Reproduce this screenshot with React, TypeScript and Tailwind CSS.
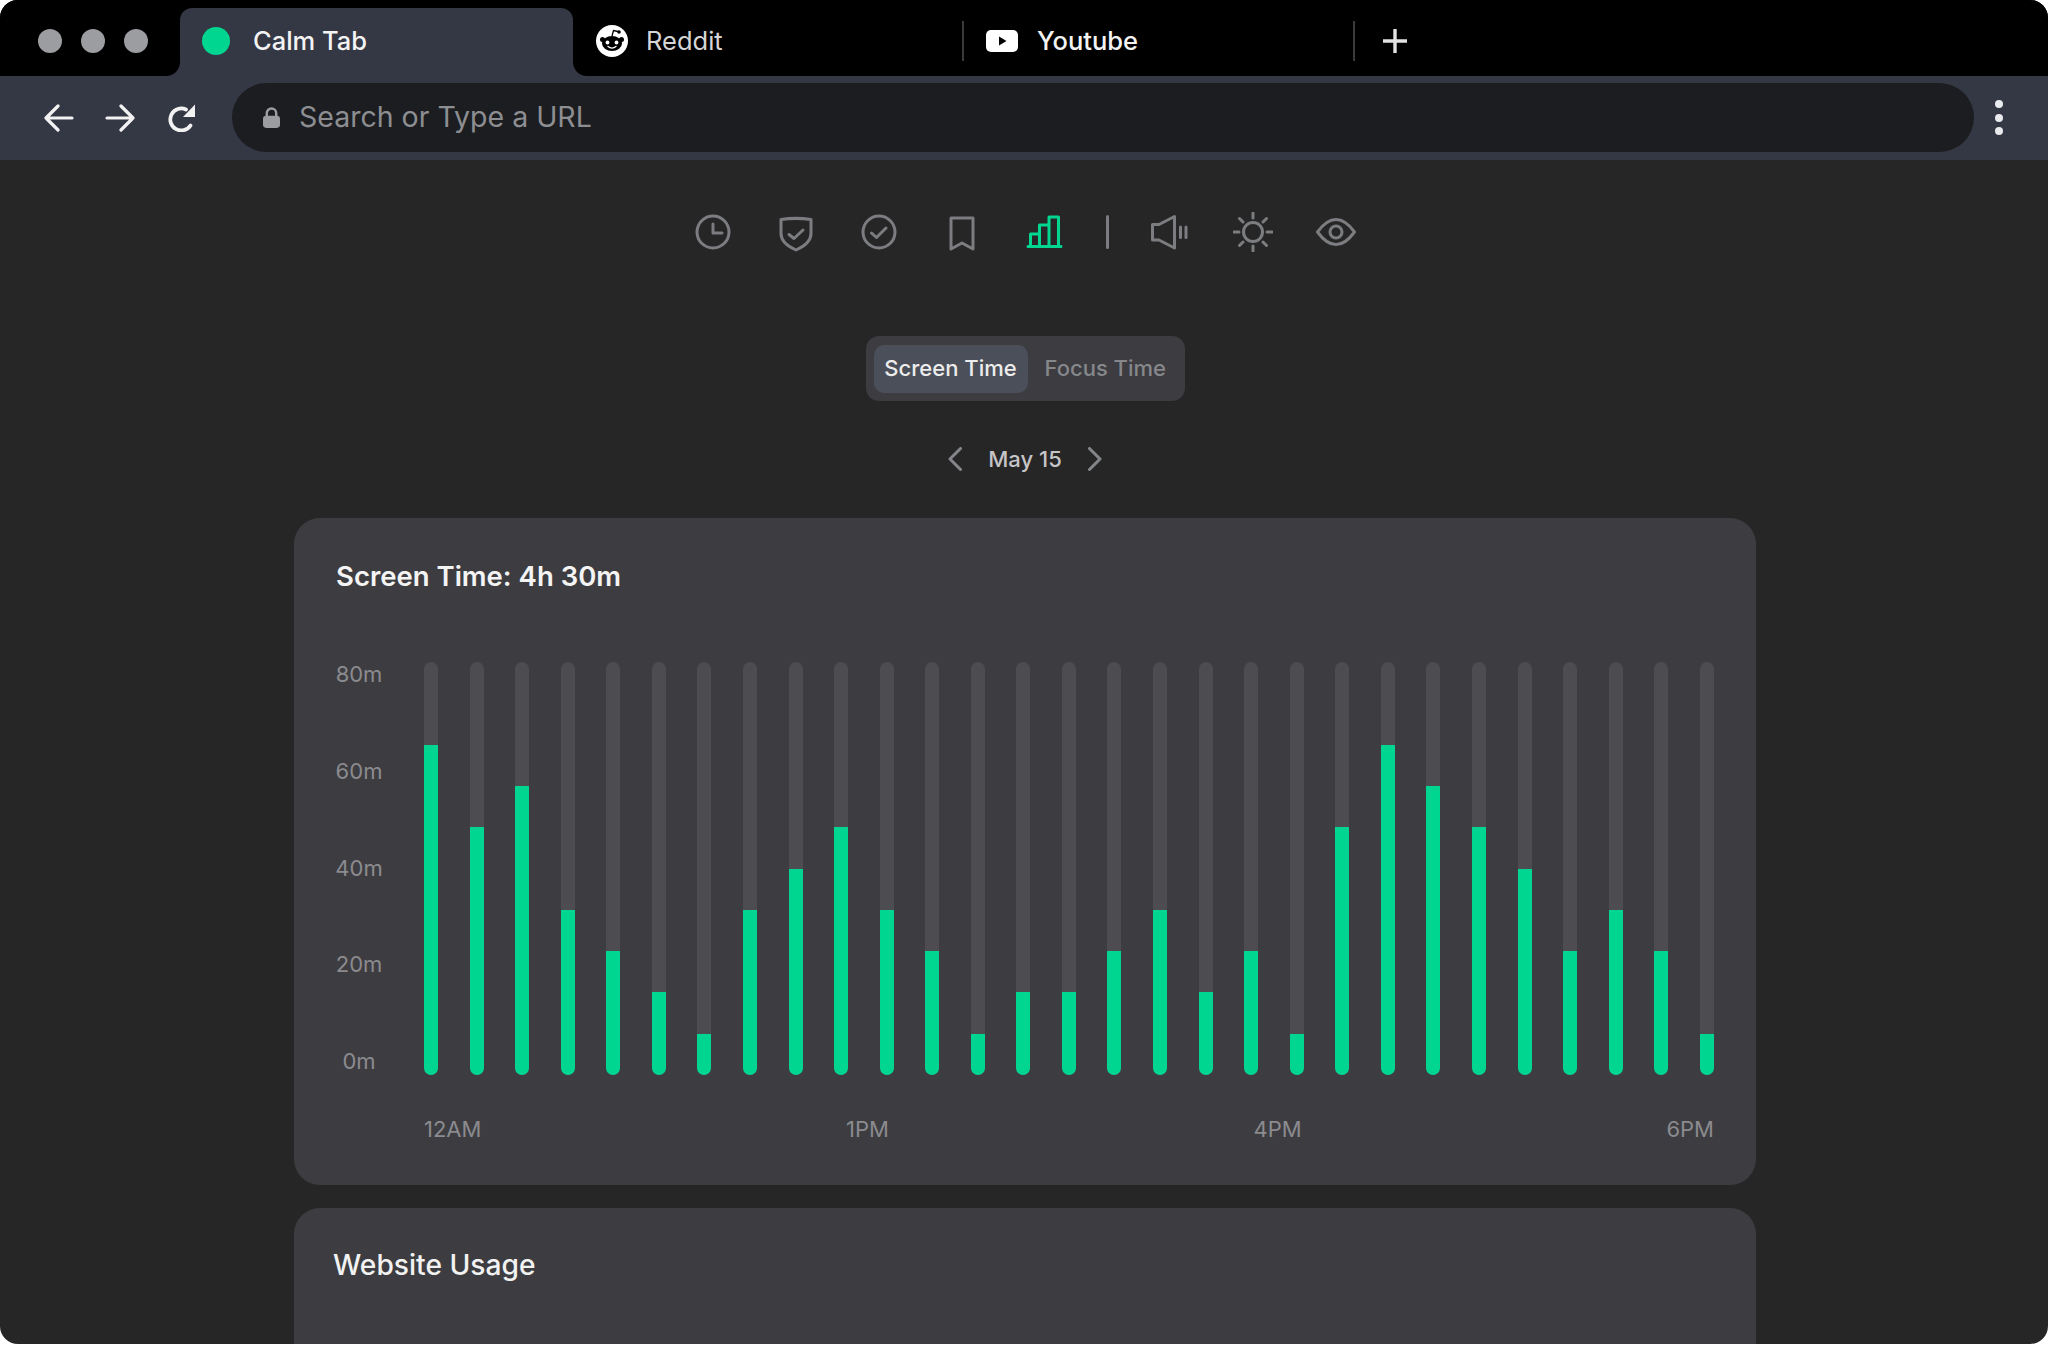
const font = "[font-family:Inter,'Noto_Sans',sans-serif]";

const usage = [80, 60, 70, 40, 30, 20, 10, 40, 50, 60, 40, 30, 10, 20, 20, 30, 40, 20, 30, 10, 60, 80, 70, 60, 50, 30, 40, 30, 10];
const yLabels = ["80m", "60m", "40m", "20m", "0m"];
const xLabels = ["12AM", "1PM", "4PM", "6PM"];

function ToolIcon({ children, color = "#7c7d81" }: { children: React.ReactNode; color?: string }) {
  return (
    <div className="flex w-[83px] items-center justify-center">
      <svg width="40" height="40" viewBox="0 0 40 40" fill="none" stroke={color} strokeWidth="3" strokeLinecap="round" strokeLinejoin="round">
        {children}
      </svg>
    </div>
  );
}

function ToolRow() {
  return (
    <div className="mr-[2px] flex h-10 items-center">
      <ToolIcon>
        <circle cx="20" cy="20" r="16" />
        <path d="M20 12v9h9" />
      </ToolIcon>
      <ToolIcon>
        <path d="M5 7.5c10-1.5 20-1.500 30 0v14c0 8-7 13-15 16.500c-8-3.500-15-8.500-15-16.500z" />
        <path d="M13 22.500l5 4l9-8.500" />
      </ToolIcon>
      <ToolIcon>
        <circle cx="20" cy="20" r="16" />
        <path d="M12.500 21l5 4.500l9.500-9.500" />
      </ToolIcon>
      <ToolIcon>
        <path d="M9 6h22v31l-11-6l-11 6z" />
      </ToolIcon>
      <ToolIcon color="#00d68f">
        <path d="M5.500 34V22h9v12M14.500 34V13h9.500v21M24 34V5h9.500v29M3 34.500h33" />
      </ToolIcon>
      <div className="flex w-[42px] justify-center">
        <div className="h-[34px] w-[3px] rounded-full bg-[#7c7d81]" />
      </div>
      <ToolIcon>
        <path d="M2.500 12.500H9L24.500 4.500V36L9 28H2.500z" />
        <path d="M30.500 15v10.500M36 15v10.500" />
      </ToolIcon>
      <ToolIcon>
        <circle cx="20" cy="20" r="9.500" />
        <path d="M20 1v5M20 34v5M1 20h5M34 20h5M6.500 6.500l3.500 3.500M30 30l3.500 3.500M6.500 33.500L10 30M30 10l3.500-3.500" />
      </ToolIcon>
      <ToolIcon>
        <path d="M1.500 20C8 11 14 7.500 20 7.500S32 11 38.500 20C32 29 26 32.500 20 32.500S8 29 1.500 20z" />
        <circle cx="20" cy="20" r="6" />
      </ToolIcon>
    </div>
  );
}

function Chevron({ left }: { left?: boolean }) {
  return (
    <svg width="14" height="24" viewBox="0 0 14 24" fill="none" stroke="#85868a" strokeWidth="3" strokeLinecap="round" strokeLinejoin="round">
      <path d={left ? "M12.500 1.500L2 12l10.500 10.500" : "M1.500 1.500L12 12L1.500 22.500"} />
    </svg>
  );
}

function ScreenTimeCard() {
  return (
    <section className="w-[1462px] rounded-[26px] bg-[#3d3d41] pt-[39px] pr-[42px] pb-[42px] pl-[42px]">
      <h2 className="mb-[67px] h-[38px] text-[27.500px] leading-[38px] font-semibold text-[#f4f4f4]">Screen Time: 4h 30m</h2>
      <div className="flex">
        <div className="flex h-[411px] w-[46px] flex-col items-center justify-between text-[22px] leading-6 text-[#8b8b8f]">
          {yLabels.map((label) => (
            <span key={label}>{label}</span>
          ))}
        </div>
        <div className="ml-[42px] flex h-[413px] flex-1 justify-between">
          {usage.map((value, i) => (
            <div key={i} className="flex h-full w-[14px] flex-col justify-end overflow-hidden rounded-full bg-[#4c4c51]">
              <div className="w-full bg-[#00d68f]" style={{ height: `${value}%` }} />
            </div>
          ))}
        </div>
      </div>
      <div className="mt-[40px] ml-[88px] flex h-7 justify-between text-[22px] leading-7 text-[#8b8b8f]">
        {xLabels.map((label) => (
          <span key={label}>{label}</span>
        ))}
      </div>
    </section>
  );
}

export default function App() {
  return (
    <div className={`min-h-screen bg-white ${font}`}>
      <div className="flex h-[1344px] flex-col overflow-hidden rounded-[18px] bg-[#262626]">
        {/* tab strip */}
        <div className="flex h-[76px] shrink-0 bg-[#343744]">
          <div className="flex w-[180px] items-center gap-[19px] rounded-br-[14px] bg-black pt-[6px] pl-[38px]">
            <div className="h-6 w-6 rounded-full bg-[#9b9da0]" />
            <div className="h-6 w-6 rounded-full bg-[#9b9da0]" />
            <div className="h-6 w-6 rounded-full bg-[#9b9da0]" />
          </div>
          <div className="w-[393px] bg-black pt-2">
            <div className="flex h-[68px] items-center rounded-t-[12px] bg-[#343744] pb-[2px] pl-[22px]">
              <div className="h-7 w-7 rounded-full bg-[#00d68f]" />
              <span className="ml-[23px] text-[25.500px] font-medium text-[#f3f3f3]">Calm Tab</span>
            </div>
          </div>
          <div className="flex flex-1 items-center rounded-bl-[14px] bg-black pt-[6px]">
            <div className="flex h-10 w-[391px] items-center border-r-2 border-[#3a3a3c] pl-[23px]">
              <svg width="32" height="32" viewBox="0 0 32 32">
                <circle cx="16" cy="16" r="16" fill="#fff" />
                <circle cx="6.500" cy="14.500" r="2.500" fill="#000" />
                <circle cx="25.500" cy="14.500" r="2.500" fill="#000" />
                <ellipse cx="16" cy="18.500" rx="10" ry="7.500" fill="#000" />
                <path d="M16 11l1.500-5.500l4.500 1" fill="none" stroke="#000" strokeWidth="1.300" />
                <circle cx="23" cy="7" r="1.800" fill="#000" />
                <circle cx="11.500" cy="17.500" r="1.900" fill="#fff" />
                <circle cx="20.500" cy="17.500" r="1.900" fill="#fff" />
                <path d="M12 21.500c2.500 2 5.500 2 8 0" fill="none" stroke="#fff" strokeWidth="1.300" strokeLinecap="round" />
              </svg>
              <span className="ml-[18px] text-[25.500px] text-[#d6d6d6]">Reddit</span>
            </div>
            <div className="flex h-10 w-[391px] items-center border-r-2 border-[#3a3a3c] pl-[22px]">
              <svg width="32" height="22" viewBox="0 0 32 22">
                <rect width="32" height="22" rx="5" fill="#fff" />
                <path d="M13 6.500v9l7.500-4.500z" fill="#000" />
              </svg>
              <span className="ml-[19px] text-[25.500px] font-medium text-[#f3f3f3]">Youtube</span>
            </div>
            <svg className="ml-[27px]" width="26" height="26" viewBox="0 0 26 26" fill="none" stroke="#e2e2e2" strokeWidth="3.400">
              <path d="M13 1v24M1 13h24" />
            </svg>
          </div>
        </div>

        {/* address bar */}
        <div className="flex h-[84px] shrink-0 items-center bg-[#343744] pb-[1px]">
          <div className="flex w-[232px] items-center pl-[44px]">
            <svg width="30" height="28" viewBox="0 0 30 28" fill="none" stroke="#f2f2f2" strokeWidth="3.200" strokeLinecap="round" strokeLinejoin="round">
              <path d="M2 14h26M14 2L2 14l12 12" />
            </svg>
            <svg className="ml-[31px]" width="30" height="28" viewBox="0 0 30 28" fill="none" stroke="#f2f2f2" strokeWidth="3.200" strokeLinecap="round" strokeLinejoin="round">
              <path d="M28 14H2M16 2l12 12l-12 12" />
            </svg>
            <svg className="ml-[33px]" width="28" height="28" viewBox="0 0 28 28">
              <path d="M22.500 21.500A11 11 0 1 1 18 5.500" fill="none" stroke="#f2f2f2" strokeWidth="3.800" strokeLinecap="round" />
              <path d="M27 0.500V13H15z" fill="#f2f2f2" />
            </svg>
          </div>
          <div className="flex h-[69px] w-[1742px] items-center rounded-full bg-[#1c1d20] pl-[31px]">
            <svg width="17" height="22" viewBox="0 0 18 22">
              <path d="M4 10V6a5 5 0 0 1 10 0v4" fill="none" stroke="#9b9da0" strokeWidth="2.600" />
              <rect y="8.500" width="18" height="13" rx="3.500" fill="#9b9da0" />
            </svg>
            <span className="ml-[19px] text-[28.500px] text-[#8d8e92]">Search or Type a URL</span>
          </div>
          <div className="ml-[21px] flex flex-col gap-[5.500px]">
            <div className="h-2 w-2 rounded-full bg-[#e8eaee]" />
            <div className="h-2 w-2 rounded-full bg-[#e8eaee]" />
            <div className="h-2 w-2 rounded-full bg-[#e8eaee]" />
          </div>
        </div>

        {/* page */}
        <main className="flex flex-col items-center pt-[52px] pl-[2px]">
          <ToolRow />

          <div className="mt-[84px] flex h-[65px] w-[319px] items-center rounded-[13px] bg-[#3c3c41] pl-2">
            <div className="flex h-12 w-[154px] items-center justify-center rounded-[10px] bg-[#4b4f59] text-[22px] font-medium text-[#ececec]">Screen Time</div>
            <div className="ml-[17px] text-[22px] font-medium text-[#86878b]">Focus Time</div>
          </div>

          <div className="mt-[46px] flex h-6 items-center gap-[26px]">
            <Chevron left />
            <span className="text-[22px] font-medium text-[#c5c5c7]">May 15</span>
            <Chevron />
          </div>

          <div className="mt-[47px]">
            <ScreenTimeCard />
          </div>

          <section className="mt-[23px] h-[300px] w-[1462px] rounded-[26px] bg-[#3d3d41] pt-[40px] pl-[39px]">
            <h2 className="h-[34px] text-[28.200px] leading-[34px] font-medium text-[#f2f2f2]">Website Usage</h2>
          </section>
        </main>
      </div>
    </div>
  );
}
